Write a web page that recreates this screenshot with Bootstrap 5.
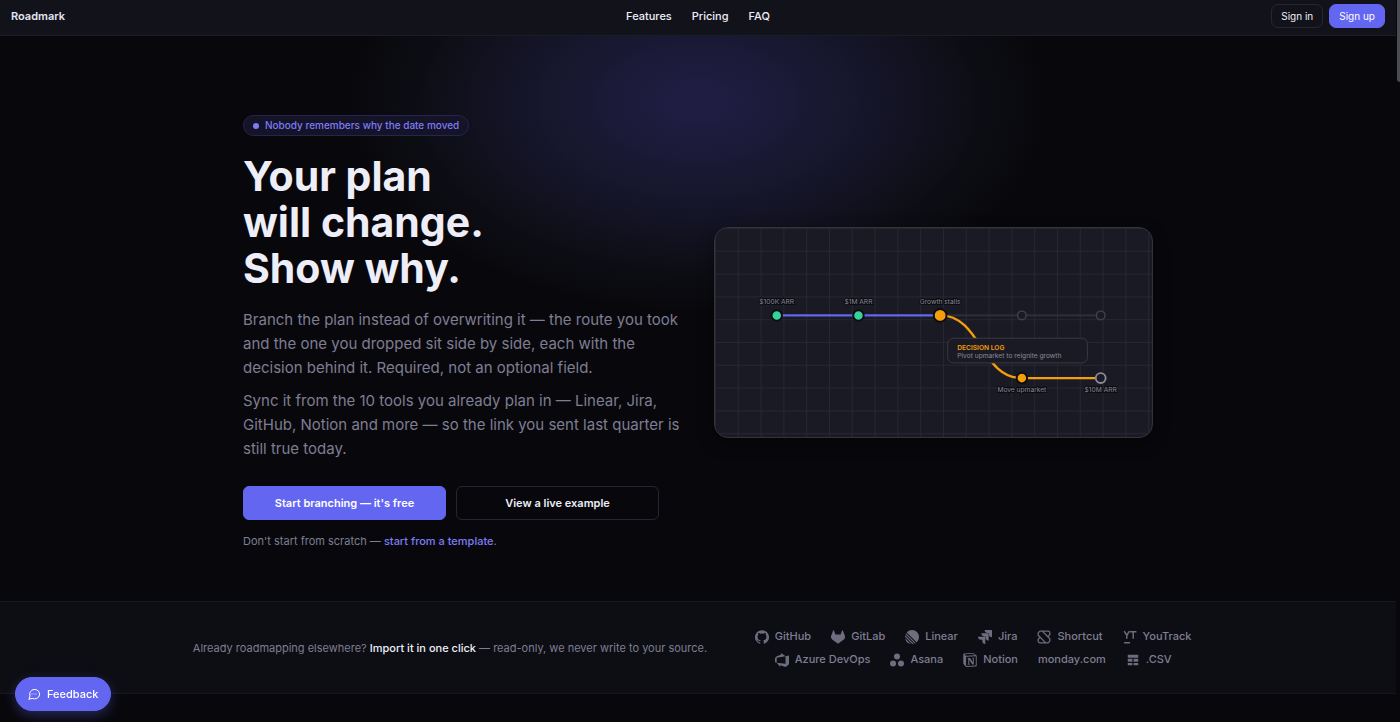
<!DOCTYPE html>
<html lang="en">
<head>
<meta charset="utf-8">
<meta name="viewport" content="width=device-width, initial-scale=1">
<title>Roadmark</title>
<link href="https://cdn.jsdelivr.net/npm/bootstrap@5.3.0/dist/css/bootstrap.min.css" rel="stylesheet">
<style>
  :root { --ink:#08080c; --panel:#12131a; --line:#1c1d25; --accent:#6366f1; --soft:#7f7d92; --bright:#eeeef8; }
  body { background:var(--ink); color:var(--soft); font-family:Inter,"Liberation Sans",sans-serif; font-size:11px; line-height:18px; min-height:100vh; padding-right:4px; }
  a { text-decoration:none; }
  .topbar { background:var(--panel); border-bottom:1px solid var(--line); padding:4px 11px 7px; }
  .topbar > * { flex:1 1 0; }
  .brand { color:#e4e4f2; font-weight:600; font-size:11px; }
  .menu { gap:20px; }
  .menu a { color:var(--bright); font-weight:500; }
  .account { gap:6px; }
  .btn { --bs-btn-font-weight:600; --bs-btn-color:var(--bright); --bs-btn-border-color:#262631; --bs-btn-hover-color:#fff; --bs-btn-hover-border-color:var(--accent); --bs-btn-border-radius:6px; --bs-btn-font-size:11px; --bs-btn-padding-y:7px; line-height:18px; }
  .btn-slim { --bs-btn-font-weight:400; --bs-btn-font-size:10px; --bs-btn-padding-y:2px; --bs-btn-padding-x:9px; --bs-btn-border-radius:7px; }
  .btn-accent { --bs-btn-bg:var(--accent); --bs-btn-border-color:var(--accent); --bs-btn-hover-bg:#7477f5; --bs-btn-color:#fff; }
  .hero { background:radial-gradient(ellipse 350px 210px at 50% 66px,#201e44 0%,#1b1a38 25%,#141426 55%,#0c0d13 82%,var(--ink) 100%); padding:79px 0 52px; }
  .hero-grid { max-width:910px; display:grid; grid-template-columns:1fr 1fr; gap:32px; }
  .pill { background:#141328; border:1px solid #27244f; color:#7d7cf5; font-size:10px; font-weight:500; line-height:19px; padding:0 9px; gap:6px; }
  .pill-dot { width:6px; height:6px; background:#7d7cf5; }
  h1 { color:var(--bright); font-size:41px; line-height:46px; font-weight:700; margin:17px 0; }
  .lede { font-size:15px; line-height:24px; margin-bottom:9px; }
  .cta { margin-top:25px; max-width:416px; gap:10px; }
  .hint { margin-top:13px; line-height:16px; }
  .hint a { color:#7d7cf5; font-weight:500; }
  .plan-map { background:#1a1a25; border:1px solid #33333c; border-radius:14px; box-shadow:0 6px 16px #0006; overflow:hidden; }
  .plan-map svg { display:block; width:100%; height:auto; }
  .plan-map text { font-family:Inter,sans-serif; font-size:7px; fill:#8a8998; }
  .node-label { stroke:#0b0b11; stroke-width:2px; paint-order:stroke; text-anchor:middle; }
  .sources { background:#0d0e13; border-top:1px solid #17181f; border-bottom:1px solid #17181f; padding:23px 0 22px; }
  .sources-row { gap:36px; }
  .sources strong { color:var(--bright); font-weight:500; }
  .tools { max-width:460px; column-gap:20px; row-gap:0; font-weight:500; line-height:23px; }
  .tools li { display:flex; align-items:center; gap:6px; }
  .tools svg { width:14px; height:14px; fill:currentColor; opacity:.85; }
  .feedback { left:15px; bottom:11px; gap:7px; --bs-btn-font-weight:500; --bs-btn-padding-x:12px; box-shadow:0 4px 12px #6366f155; }
  .scroll-thumb { top:0; right:0; width:3px; height:82px; background:#4b4b52; border-radius:0 0 0 3px; }
  @media (max-width:800px) { .hero-grid { grid-template-columns:1fr; } }
</style>
</head>
<body>
<header class="topbar d-flex align-items-center">
  <div><a class="brand" href="#">Roadmark</a></div>
  <nav class="menu d-flex justify-content-center" aria-label="Main">
    <a href="#features">Features</a><a href="#pricing">Pricing</a><a href="#faq">FAQ</a>
  </nav>
  <div class="account d-flex justify-content-end">
    <button class="btn btn-slim" type="button">Sign in</button>
    <button class="btn btn-slim btn-accent" type="button">Sign up</button>
  </div>
</header>
<main>
  <section class="hero">
    <div class="hero-grid mx-auto align-items-center">
      <div>
        <div class="pill rounded-pill d-inline-flex align-items-center"><span class="pill-dot rounded-circle"></span>Nobody remembers why the date moved</div>
        <h1>Your plan<br>will change.<br>Show why.</h1>
        <p class="lede">Branch the plan instead of overwriting it — the route you took and the one you dropped sit side by side, each with the decision behind it. Required, not an optional field.</p>
        <p class="lede">Sync it from the 10 tools you already plan in — Linear, Jira, GitHub, Notion and more — so the link you sent last quarter is still true today.</p>
        <div class="cta d-flex">
          <button class="btn btn-accent flex-fill w-50" type="button">Start branching — it's free</button>
          <button class="btn flex-fill w-50" type="button">View a live example</button>
        </div>
        <p class="hint mb-0">Don't start from scratch — <a href="#templates">start from a template</a>.</p>
      </div>
      <div class="plan-map">
        <svg viewBox="0 0 460 220" role="img" aria-label="Plan with a branch">
          <defs><pattern id="mesh" width="24" height="24" patternUnits="userSpaceOnUse"><path d="M24 0H0V24" fill="none" stroke="#272731" stroke-width="2"/></pattern></defs>
          <rect width="460" height="220" fill="url(#mesh)"/>
          <path d="M238 92H406" stroke="#30303c" stroke-width="2"/>
          <path d="M65 92H237" stroke="#6366f1" stroke-width="2.5"/>
          <path d="M237 92C280 92 280 158 323 158H406" fill="none" stroke="#f59e0b" stroke-width="2.5"/>
          <g stroke="#0b0b11" stroke-width="2"><circle cx="65" cy="92" r="5.5" fill="#34d399"/><circle cx="151" cy="92" r="5.5" fill="#34d399"/><circle cx="237" cy="92" r="6.7" fill="#f59e0b"/><circle cx="323" cy="158" r="5.5" fill="#f59e0b"/></g>
          <g fill="#1a1a25" stroke="#41414e" stroke-width="1.5"><circle cx="323" cy="92" r="4.5"/><circle cx="406" cy="92" r="4.5"/><circle cx="406" cy="158" r="5.2" stroke="#8a8998" stroke-width="2"/></g>
          <rect x="245" y="116" width="147" height="26" rx="6" fill="#1a1a25" stroke="#3a3a43"/>
          <text x="255" y="128" style="fill:#f59e0b;font-weight:600">DECISION LOG</text>
          <text x="255" y="137">Pivot upmarket to reignite growth</text>
          <g class="node-label"><text x="65" y="80">$100K ARR</text><text x="151" y="80">$1M ARR</text><text x="237" y="80">Growth stalls</text><text x="323" y="173">Move upmarket</text><text x="406" y="173">$10M ARR</text></g>
        </svg>
      </div>
    </div>
  </section>
  <section class="sources">
    <div class="sources-row d-flex flex-wrap justify-content-center align-items-center">
      <p class="mb-0">Already roadmapping elsewhere? <strong>Import it in one click</strong> — read-only, we never write to your source.</p>
      <ul class="tools list-unstyled d-flex flex-wrap justify-content-center mb-0">
        <li><svg viewBox="0 0 24 24"><path d="M12 .3a12 12 0 0 0-3.8 23.4c.6.1.8-.3.8-.6v-2c-3.3.7-4-1.6-4-1.6-.6-1.4-1.4-1.8-1.4-1.8-1-.7.1-.7.1-.7 1.2 0 1.9 1.2 1.9 1.2 1 1.8 2.8 1.3 3.5 1 0-.8.4-1.3.7-1.6-2.7-.3-5.5-1.3-5.5-6 0-1.2.5-2.3 1.3-3.1-.2-.4-.6-1.6 0-3.2 0 0 1-.3 3.4 1.2a11.5 11.5 0 0 1 6 0c2.3-1.5 3.3-1.2 3.3-1.2.6 1.6.2 2.8 0 3.2.9.8 1.3 1.9 1.3 3.2 0 4.6-2.8 5.6-5.5 5.9.5.4.9 1 .9 2.2v3.3c0 .3.1.7.8.6A12 12 0 0 0 12 .3"/></svg>GitHub</li>
        <li><svg viewBox="0 0 24 24"><path d="m23.6 9.6-3.3-8.6a.86.86 0 0 0-1.6.1l-2.2 6.7H7.5L5.3 1.1A.86.86 0 0 0 3.7 1L.4 9.5a6.07 6.07 0 0 0 2 7l5 3.8 4 3a1 1 0 0 0 1.2 0l4-3 5-3.8a6.07 6.07 0 0 0 2-6.9z"/></svg>GitLab</li>
        <li><svg viewBox="0 0 24 24"><path d="M2.886 4.18A11.982 11.982 0 0 1 11.99 0C18.624 0 24 5.376 24 12.009c0 3.64-1.62 6.903-4.18 9.105L2.887 4.18ZM1.817 5.626l16.556 16.556c-.524.33-1.075.62-1.65.866L.951 7.277c.247-.575.537-1.126.866-1.65ZM.322 9.163l14.515 14.515c-.71.172-1.443.282-2.195.322L0 11.358a12 12 0 0 1 .322-2.195Zm-.17 4.862 9.823 9.824a12.02 12.02 0 0 1-9.824-9.824Z"/></svg>Linear</li>
        <li><svg viewBox="0 0 24 24"><path d="M11.571 11.513H0a5.218 5.218 0 0 0 5.232 5.215h2.13v2.057A5.215 5.215 0 0 0 12.575 24V12.518a1.005 1.005 0 0 0-1.005-1.005zm5.723-5.756H5.736a5.215 5.215 0 0 0 5.215 5.214h2.129v2.058a5.218 5.218 0 0 0 5.215 5.214V6.758a1.001 1.001 0 0 0-1.001-1.001zM23.013 0H11.455a5.215 5.215 0 0 0 5.215 5.215h2.129v2.057A5.215 5.215 0 0 0 24 12.483V1.005A1.001 1.001 0 0 0 23.013 0Z"/></svg>Jira</li>
        <li><svg viewBox="0 0 24 24"><path d="M18 12l4-4V5a3 3 0 0 0-3-3H5L2 5v4l13 13M6 12l-4 4v3a3 3 0 0 0 3 3h14l3-3v-4L9 2" fill="none" stroke="currentColor" stroke-width="2.2" stroke-linejoin="round"/></svg>Shortcut</li>
        <li><svg viewBox="0 0 24 24"><path d="m2 2 4.5 7v6M11 2 6.5 9M12 3h11M17.5 3v12M2 22h10" fill="none" stroke="currentColor" stroke-width="2.5"/></svg>YouTrack</li>
        <li><svg viewBox="0 0 24 24"><path d="M0 8.877 2.247 5.91l8.405-3.416V.022l7.37 5.393L2.966 8.338v8.225L0 15.707zm24-4.45v14.651l-5.753 4.9-9.303-3.057v3.056l-5.978-7.416 15.057 1.798V5.415z"/></svg>Azure DevOps</li>
        <li><svg viewBox="0 0 24 24"><circle cx="12" cy="6.1" r="5.2"/><circle cx="5.2" cy="17.9" r="5.2"/><circle cx="18.8" cy="17.9" r="5.2"/></svg>Asana</li>
        <li><svg viewBox="0 0 24 24"><path d="M4.459 4.208c.746.606 1.026.56 2.428.466l13.215-.793c.28 0 .047-.28-.046-.326L17.86 1.968c-.42-.326-.981-.7-2.055-.607L3.01 2.295c-.466.046-.56.28-.374.466zm.793 3.08v13.904c0 .747.373 1.027 1.214.98l14.523-.84c.841-.046.935-.56.935-1.167V6.354c0-.606-.233-.933-.748-.887l-15.177.887c-.56.047-.747.327-.747.933zm14.337.745c.093.42 0 .84-.42.888l-.7.14v10.264c-.608.327-1.168.514-1.635.514-.748 0-.935-.234-1.495-.933l-4.577-7.186v6.952L12.21 19s0 .84-1.168.84l-3.222.186c-.093-.186 0-.653.327-.746l.84-.233V9.854L7.822 9.76c-.094-.42.14-1.026.793-1.073l3.456-.233 4.764 7.279v-6.44l-1.215-.139c-.093-.514.28-.887.747-.933zM1.936 1.035l13.31-.98c1.634-.14 2.055-.047 3.082.7l4.249 2.986c.7.513.934.653.934 1.213v16.378c0 1.026-.373 1.634-1.68 1.726l-15.458.934c-.98.047-1.448-.093-1.962-.747l-3.129-4.06c-.56-.747-.793-1.306-.793-1.96V2.667c0-.839.374-1.54 1.447-1.632z" fill-rule="evenodd"/></svg>Notion</li>
        <li>monday.com</li>
        <li><svg viewBox="0 0 24 24"><path d="M3 3h18v5H3zM3 10h8v5H3zm10 0h8v5h-8zM3 17h8v4H3zm10 0h8v4h-8z"/></svg>.CSV</li>
      </ul>
    </div>
  </section>
</main>
<button class="feedback btn btn-accent rounded-pill position-fixed d-flex align-items-center" type="button">
  <svg width="12" height="12" viewBox="0 0 24 24" fill="none" stroke="currentColor" stroke-width="2" stroke-linecap="round" stroke-linejoin="round"><path d="M2 22l2-6A10 9.5 0 1 1 9 21zM8 12h.1M12 12h.1M16 12h.1"/></svg>Feedback
</button>
<div class="scroll-thumb position-absolute"></div>
<script src="https://cdn.jsdelivr.net/npm/bootstrap@5.3.0/dist/js/bootstrap.bundle.min.js"></script>
</body>
</html>
